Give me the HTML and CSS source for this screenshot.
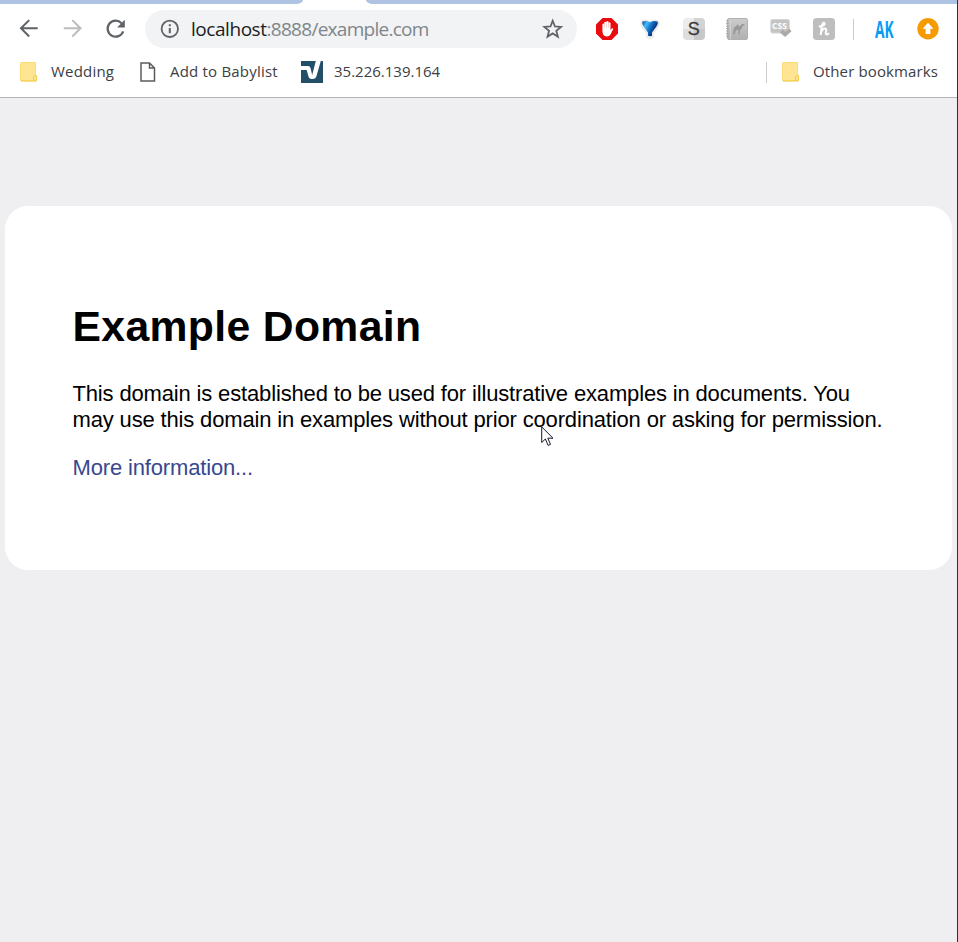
FILE: index.html
```html
<!DOCTYPE html>
<html lang="en">
<head>
<meta charset="utf-8">
<title>Example Domain</title>
<link rel="stylesheet" href="styles.css">
</head>
<body>
<div class="window">
  <header class="chrome">
    <div class="tabstrip"><div class="tab-left"></div><div class="tab-right"></div></div>
    <div class="toolbar">
      <nav class="nav">
        <svg width="22" height="22" viewBox="0 0 22 22" fill="none" stroke="#5f6368" stroke-width="2"><path d="M19.700 10.300H3.200M11.200 2.100L3 10.300l8.200 8.200"/></svg>
        <svg width="22" height="22" viewBox="0 0 22 22" fill="none" stroke="#babcbe" stroke-width="2"><path d="M1.800 10.300h16.500M10.300 2.100l8.200 8.200-8.200 8.200"/></svg>
        <svg width="22" height="22" viewBox="0 0 22 22"><path d="M18.200 13.300A8 8 0 1 1 16.500 5.200" fill="none" stroke="#5f6368" stroke-width="2.200"/><path d="M19.800 1.800v7.700h-7.700z" fill="#5f6368"/></svg>
      </nav>
      <div class="omnibox">
        <svg width="20" height="20" viewBox="0 0 20 20"><circle cx="9.800" cy="9.800" r="8.200" fill="none" stroke="#5f6368" stroke-width="1.800"/><path d="M8.800 5.300h2v2h-2zM8.800 8.900h2v5.300h-2z" fill="#5f6368"/></svg>
        <span class="url"><b>localhost</b>:8888/example.com</span>
        <svg class="star" width="22" height="22" viewBox="0 0 22 22"><path d="M10.700 2.800l2.200 5.700 6.100.4-4.700 3.900 1.600 5.900-5.200-3.300-5.200 3.300 1.600-5.900-4.700-3.900 6.100-.4z" fill="none" stroke="#5f6368" stroke-width="1.800"/></svg>
      </div>
      <div class="extensions">
        <svg width="22" height="22" viewBox="0 0 22 22"><path d="M6.500 0h9L22 6.500v9L15.500 22h-9L0 15.500v-9z" fill="#e90b0e"/><path d="M6.400 13V6.200q.8-1.300 1.800 0V4.400q.9-1.400 2.100 0v-.7q1.100-1.400 2.200 0V5q.9-1.400 2 0v7l1.200-1.500q1.200-.7 1.600.3l-2.300 4.700q-1.200 2.900-4.300 2.900-4.300 0-4.300-5.400z" fill="#fff"/><path d="M8.300 6v3.500M10.400 5v4.500M12.500 5v4.500" stroke="#f7a0a0" stroke-width=".5"/></svg>
        <svg width="22" height="22" viewBox="0 0 22 22"><defs><linearGradient id="blue" x2="1" y2=".5"><stop stop-color="#123f88"/><stop offset=".3" stop-color="#43bdff"/><stop offset=".6" stop-color="#1269c2"/><stop offset="1" stop-color="#041b48"/></linearGradient></defs><path d="M3 3q4-2 8 1 4-3 8-1 2 2-1 7l-4 5v4q-3 3-6 0v-4l-4-5Q1 5 3 3z" fill="#fff" stroke="#e8e8e8" stroke-width="1.500"/><path d="M3.200 3.800Q7 2 11 4.200 15 2 18.800 3.800q.5 2.400-1.500 5L13 14.500v3.300q-2 1-4 0v-3.300L4.700 8.800q-2-2.600-1.500-5z" fill="url(#blue)"/></svg>
        <div class="ext-s">S</div>
        <svg width="22" height="22" viewBox="0 0 22 22"><defs><linearGradient id="grey" y2="1" x2="0"><stop stop-color="#ccc"/><stop offset="1" stop-color="#b0b0b0"/></linearGradient></defs><rect x="1.500" y=".5" width="20" height="21" rx="1.500" fill="url(#grey)" stroke="#b0b0b0"/><path d="M4.500 1v20" stroke="#d0d0d0"/><path d="M0 3h3M0 5.500h3M0 8h3M0 10.500h3M0 13h3M0 15.500h3M0 18h3" stroke="#aaa"/><path d="M7 16l.8-6 2.200-2 1.500-1.500L13 8l1.600.2.9-2.200 3.200.2-.3 1.400-1.600.2-1.200 3-1.500 1.200-.5 4.400h-1.200v-4.300l-2.300-.2-1.500 4.600H7.500z" fill="#999"/></svg>
        <svg width="22" height="22" viewBox="0 0 22 22"><rect x=".8" y="1.500" width="18.500" height="13.500" rx="1.500" fill="#c4c4c4" stroke="#d5d5d5"/><text class="css-label" x="2.100" y="11.300">CSS</text><path d="M10 14.500l2.700-2.800 2.600 2.200 4.200-3.200 2 2.600-6.400 5.700z" fill="#aaa"/></svg>
        <svg width="22" height="22" viewBox="0 0 22 22"><rect width="22" height="22" rx="3.500" fill="#bebebe"/><path d="M5.800 8.500Q12.500 8 11.500 5.300 10.300 3.500 9 7L7.700 17M8.200 14q1.500-3.500 3.800-3.500 1.900.1 1 3-.8 3.200.8 3 1.300-.1 2-1.700" fill="none" stroke="#fff" stroke-width="1.900"/></svg>
      </div>
      <div class="separator"></div>
      <div class="profile">AK</div>
      <svg class="update" width="22" height="22" viewBox="0 0 22 22"><circle cx="11" cy="10.700" r="10.700" fill="#f59b00"/><path d="M11 4.700l5.500 6h-3.100V16H8.600v-5.300H5.500z" fill="#fff"/></svg>
    </div>
    <div class="bookmarks">
      <svg class="folder" width="18" height="22" viewBox="0 0 18 22"><path d="M1.500 1.500h14v13h1v4.500q0 1-1 1h-14q-1 0-1-1v-16.500q0-1 1-1z" fill="#ffe591" stroke="#f9dc72"/><path d="M13.500 19.500v-4q0-.9.800-.9h1.500q.8 0 .8.900V19q0 .9-.8.900H1" fill="none" stroke="#f2cc48"/></svg>
      <span class="label wedding">Wedding</span>
      <svg class="page" width="16" height="20" viewBox="0 0 16 20"><path d="M1 1h8.500L14.500 6v13H1zM9.500 1v5h5" fill="#fff" stroke="#5a5c5f" stroke-width="1.500"/></svg>
      <span class="label babylist">Add to Babylist</span>
      <svg class="vultr" width="22" height="22" viewBox="0 0 22 22"><path fill="#234e68" d="M0 0h22v22H0z"/><path d="M0 5h7q2 0 2.500 2l1.700 7L14.800 0h5L15.500 15q-.8 3-3.800 3H10q-2 0-2.700-3L5.700 9H0z" fill="#fff"/></svg>
      <span class="label address">35.226.139.164</span>
      <div class="separator other-separator"></div>
      <svg class="folder other-folder" width="18" height="22" viewBox="0 0 18 22"><path d="M1.500 1.500h14v13h1v4.500q0 1-1 1h-14q-1 0-1-1v-16.500q0-1 1-1z" fill="#ffe591" stroke="#f9dc72"/><path d="M13.500 19.500v-4q0-.9.800-.9h1.500q.8 0 .8.900V19q0 .9-.8.900H1" fill="none" stroke="#f2cc48"/></svg>
      <span class="label other">Other bookmarks</span>
    </div>
  </header>
  <main class="page-body">
    <article class="card">
      <h1>Example Domain</h1>
      <p>This domain is established to be used for illustrative examples in documents. You<br>may use this domain in examples without prior coordination or asking for permission.</p>
      <p><a>More information...</a></p>
    </article>
  </main>
  <svg class="cursor" width="14" height="21" viewBox="0 0 14 21"><path d="M.7.900v15.600l3.700-3.500 2.700 6.400 2.400-1-2.700-6.200H12z" fill="#fff" stroke="#18182a"/></svg>
</div>
</body>
</html>
```
FILE: styles.css
```css
* { box-sizing: border-box; }
body { margin: 0; overflow: hidden; font-family: "Liberation Sans", Arial, sans-serif; }
.window { position: relative; width: 958px; height: 942px; border-right: 1px solid #303134; background: #efeff1; }
.chrome { height: 98px; background: #fff; border-bottom: 1px solid #b4b5b7; }
.tabstrip { display: flex; justify-content: space-between; height: 4px; }
.tab-left { width: 303px; background: #adc3e1; border-bottom-right-radius: 7px 4px; }
.tab-right { width: 591px; background: #adc3e1; border-bottom-left-radius: 7px 4px; }
.toolbar { display: flex; align-items: center; height: 50px; padding-left: 18px; }
.toolbar svg, .bookmarks svg { display: block; flex: none; }
.nav { display: flex; gap: 21.5px; width: 127px; }
.omnibox { display: flex; align-items: center; width: 432px; height: 38px; padding: 0 13px 0 15px; border-radius: 19px; background: #f1f3f4; }
.url { margin-left: 11px; padding-bottom: 1px; font: 19px/28px "Open Sans", sans-serif; letter-spacing: -.72px; color: #80868b; white-space: nowrap; }
.url b { font-weight: 400; letter-spacing: -.45px; color: #202124; }
.star { margin-left: auto; }
.extensions { display: flex; gap: 21.4px; margin-left: 19px; }
.ext-s { width: 22px; height: 22px; border-radius: 4px; background: conic-gradient(#d3d3d3 25%, #c8c8c8 0 50%, #dedede 0 75%, #ececec 0); color: #3c3c3c; font-size: 18px; line-height: 22px; text-align: center; -webkit-text-stroke: .3px; }
.css-label { fill: #fff; font: bold 8.5px "Open Sans", sans-serif; }
.separator { width: 1px; height: 21px; margin-left: 18px; background: #c9cbcf; }
.profile { width: 20px; height: 23px; margin-left: 21px; color: #079bf2; font: bold 23px/22px "Open Sans", sans-serif; transform: scaleX(.6); transform-origin: left; white-space: nowrap; }
.update { margin-left: 22px; }
.bookmarks { display: flex; align-items: center; height: 36px; padding-left: 20px; }
.label { padding-bottom: 2px; font: 15px/22px "Open Sans", sans-serif; letter-spacing: .2px; color: #3c4043; white-space: nowrap; }
.wedding { width: 65px; margin-left: 13px; }
.page { margin-left: 24px; }
.babylist { width: 110px; margin-left: 14px; }
.vultr { margin-left: 21px; }
.address { margin-left: 11px; letter-spacing: 0; }
.other-separator { margin-left: auto; }
.other-folder { margin-left: 15px; }
.other { width: 126px; margin: 0 18px 0 13px; letter-spacing: .13px; }
.page-body { padding: 108px 5px 0; }
.card { height: 364px; padding: 95px 67.500px 0; border-radius: 23px; background: #fff; color: #000; }
h1 { margin: 0; font-size: 42.7px; line-height: 50px; letter-spacing: .35px; white-space: nowrap; }
p { margin: 30px 0 0; font-size: 22px; line-height: 26px; letter-spacing: -.155px; white-space: nowrap; }
p + p { margin-top: 22px; }
a { color: #38488f; }
.cursor { position: absolute; left: 541px; top: 426px; }
```
